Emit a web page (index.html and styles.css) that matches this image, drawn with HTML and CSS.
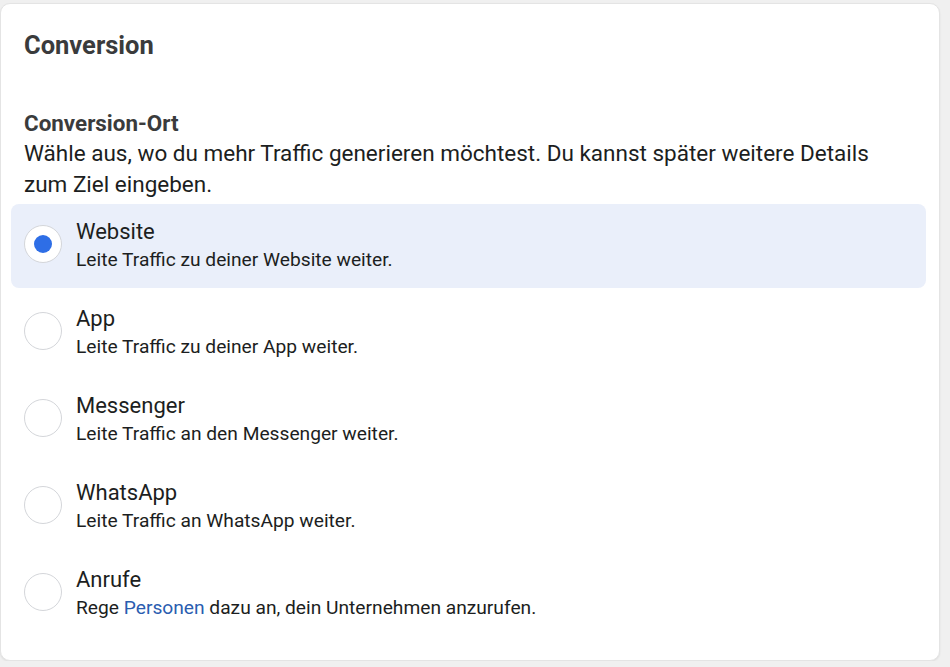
FILE: index.html
```html
<!DOCTYPE html>
<html lang="de">
<head>
  <meta charset="UTF-8">
  <meta name="viewport" content="width=device-width, initial-scale=1.0">
  <title>Conversion</title>
  <link rel="stylesheet" href="styles.css">
</head>
<body>
  <div class="card">
    <h2 class="card-title">Conversion</h2>

    <div class="section-head">
      <h3>Conversion-Ort</h3>
      <p>Wähle aus, wo du mehr Traffic generieren möchtest. Du kannst später weitere Details zum Ziel eingeben.</p>
    </div>

    <!-- Auswahl des Conversion-Orts -->
    <div class="options">
      <label class="option selected">
        <span class="radio"></span>
        <span class="option-text">
          <span class="option-title">Website</span>
          <span class="option-desc">Leite Traffic zu deiner Website weiter.</span>
        </span>
      </label>
      <label class="option">
        <span class="radio"></span>
        <span class="option-text">
          <span class="option-title">App</span>
          <span class="option-desc">Leite Traffic zu deiner App weiter.</span>
        </span>
      </label>
      <label class="option">
        <span class="radio"></span>
        <span class="option-text">
          <span class="option-title">Messenger</span>
          <span class="option-desc">Leite Traffic an den Messenger weiter.</span>
        </span>
      </label>
      <label class="option">
        <span class="radio"></span>
        <span class="option-text">
          <span class="option-title">WhatsApp</span>
          <span class="option-desc">Leite Traffic an WhatsApp weiter.</span>
        </span>
      </label>
      <label class="option">
        <span class="radio"></span>
        <span class="option-text">
          <span class="option-title">Anrufe</span>
          <span class="option-desc">Rege <a href="#">Personen</a> dazu an, dein Unternehmen anzurufen.</span>
        </span>
      </label>
    </div>
  </div>
</body>
</html>
```

FILE: styles.css
```css
* {
  box-sizing: border-box;
}
body {
  margin: 0;
  background-color: #f0f0f0;
  font-family: Roboto, 'Liberation Sans', sans-serif;
  color: #1c1e21;
}
.card {
  width: 940px;
  height: 658px;
  margin-top: 3px;
  background-color: #fff;
  border: 1px solid #e4e4e4;
  border-radius: 10px;
  box-shadow: 0 1px 2px rgba(0, 0, 0, 0.08);
  padding: 27px 13px 0 10px;
}
.card-title {
  margin: 0 0 49px 13px;
  font-size: 25.5px;
  line-height: 28px;
  font-weight: 700;
  color: #3a3b3c;
}
.section-head {
  padding-left: 13px;
}
.section-head h3 {
  margin: 0;
  font-size: 22.4px;
  line-height: 30px;
  font-weight: 700;
  color: #3a3b3c;
}
.section-head p {
  margin: 0;
  font-size: 22.5px;
  line-height: 31px;
  padding-right: 20px;
}
.options {
  margin-top: 4px;
  display: flex;
  flex-direction: column;
  gap: 3px;
}
.option {
  display: flex;
  align-items: center;
  gap: 14px;
  height: 84px;
  padding: 0 13px;
  border-radius: 8px;
  cursor: pointer;
}
.option.selected {
  background-color: #eaeffa;
}
.radio {
  flex: none;
  width: 38px;
  height: 38px;
  border-radius: 50%;
  border: 1.5px solid #d4d6da;
  background-color: #fff;
  display: flex;
  justify-content: center;
  align-items: center;
  margin-top: -4px;
}
.option.selected .radio::after {
  content: '';
  width: 18px;
  height: 18px;
  border-radius: 50%;
  background-color: #2e6ee6;
}
.option-text {
  display: flex;
  flex-direction: column;
  gap: 4px;
  margin-top: -2px;
}
.option-title {
  font-size: 22px;
  line-height: 26px;
}
.option-desc {
  font-size: 19.2px;
  line-height: 22px;
  color: #1c1e21;
}
.option-desc a {
  color: #2a5db0;
  text-decoration: none;
}
```
